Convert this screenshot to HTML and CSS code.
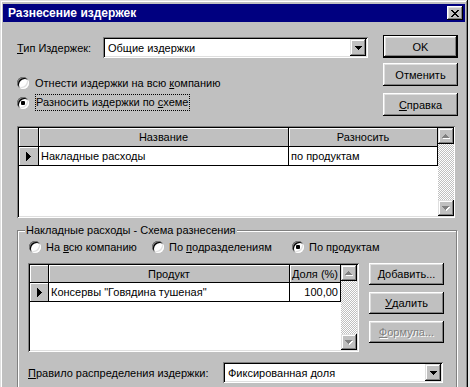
FILE: index.html
```html
<!DOCTYPE html>
<html lang="ru">
<head>
<meta charset="utf-8">
<title>Разнесение издержек</title>
<link rel="stylesheet" href="styles.css">
</head>
<body>
<div class="window">
  <div class="titlebar">
    <span class="title">Разнесение издержек</span>
    <span class="close-btn"><svg width="8" height="7" viewBox="0 0 8 7" shape-rendering="crispEdges"><path d="M0 0h2v1H0zM6 0h2v1H6zM1 1h2v1H1zM5 1h2v1H5zM2 2h4v1H2zM3 3h2v1H3zM2 4h4v1H2zM1 5h2v1H1zM5 5h2v1H5zM0 6h2v1H0zM6 6h2v1H6z"/></svg></span>
  </div>
  <div class="client">
    <div class="top">
      <div class="top-left">
        <div class="type-row">
          <span class="type-label"><u>Т</u>ип Издержек:</span>
          <div class="combo combo-type">
            <span class="combo-text">Общие издержки</span>
            <span class="combo-btn"><svg width="7" height="4" viewBox="0 0 7 4" shape-rendering="crispEdges"><path d="M0 0h7v1H0zM1 1h5v1H1zM2 2h3v1H2zM3 3h1v1H3z"/></svg></span>
          </div>
        </div>
        <div class="radio-row first"><span class="radio"></span><span>Отнести издержки на всю <u>к</u>омпанию</span></div>
        <div class="radio-row second"><span class="radio checked"><span class="dot"></span></span><span class="focus">Разносить издержки по <u>с</u>хеме</span></div>
      </div>
      <div class="buttons">
        <div class="btn default"><span class="btn-inner">OK</span></div>
        <div class="btn cancel"><span class="btn-inner">Отменить</span></div>
        <div class="btn help"><span class="btn-inner"><u>С</u>правка</span></div>
      </div>
    </div>

    <div class="grid grid1">
      <div class="grid-body">
        <div class="grid-row header">
          <div class="cell ind"></div>
          <div class="cell c-name center">Название</div>
          <div class="cell c-split center">Разносить</div>
        </div>
        <div class="grid-row data">
          <div class="cell ind"><svg width="5" height="9" viewBox="0 0 5 9" shape-rendering="crispEdges"><path d="M0 0h1v9H0zM1 1h1v7H1zM2 2h1v5H2zM3 3h1v3H3zM4 4h1v1H4z"/></svg></div>
          <div class="cell c-name">Накладные расходы</div>
          <div class="cell c-split">по продуктам</div>
        </div>
      </div>
      <div class="scrollbar">
        <span class="sb-btn"><svg width="8" height="5" viewBox="0 0 8 5" shape-rendering="crispEdges"><path fill="#fff" d="M4 1h1v1H4zM3 2h3v1H3zM2 3h5v1H2zM1 4h7v1H1z"/><path fill="#808080" d="M3 0h1v1H3zM2 1h3v1H2zM1 2h5v1H1zM0 3h7v1H0z"/></svg></span>
        <span class="sb-track"></span>
        <span class="sb-btn"><svg width="8" height="5" viewBox="0 0 8 5" shape-rendering="crispEdges"><path fill="#fff" d="M1 1h7v1H1zM2 2h5v1H2zM3 3h3v1H3zM4 4h1v1H4z"/><path fill="#808080" d="M0 0h7v1H0zM1 1h5v1H1zM2 2h3v1H2zM3 3h1v1H3z"/></svg></span>
      </div>
    </div>

    <fieldset class="group">
      <legend>Накладные расходы - Схема разнесения</legend>
      <div class="scheme-row">
        <div class="radio-item w1"><span class="radio"></span><span>На <u>в</u>сю компанию</span></div>
        <div class="radio-item w2"><span class="radio"></span><span>По <u>п</u>одразделениям</span></div>
        <div class="radio-item"><span class="radio checked"><span class="dot"></span></span><span>По п<u>р</u>одуктам</span></div>
      </div>
      <div class="middle">
        <div class="grid grid2">
          <div class="grid-body">
            <div class="grid-row header">
              <div class="cell ind"></div>
              <div class="cell c-prod center">Продукт</div>
              <div class="cell c-share right">Доля (%)</div>
            </div>
            <div class="grid-row data">
              <div class="cell ind"><svg width="5" height="9" viewBox="0 0 5 9" shape-rendering="crispEdges"><path d="M0 0h1v9H0zM1 1h1v7H1zM2 2h1v5H2zM3 3h1v3H3zM4 4h1v1H4z"/></svg></div>
              <div class="cell c-prod">Консервы "Говядина тушеная"</div>
              <div class="cell c-share right">100,00</div>
            </div>
          </div>
          <div class="scrollbar">
            <span class="sb-btn"><svg width="8" height="5" viewBox="0 0 8 5" shape-rendering="crispEdges"><path fill="#fff" d="M4 1h1v1H4zM3 2h3v1H3zM2 3h5v1H2zM1 4h7v1H1z"/><path fill="#808080" d="M3 0h1v1H3zM2 1h3v1H2zM1 2h5v1H1zM0 3h7v1H0z"/></svg></span>
            <span class="sb-track"></span>
            <span class="sb-btn"><svg width="8" height="5" viewBox="0 0 8 5" shape-rendering="crispEdges"><path fill="#fff" d="M1 1h7v1H1zM2 2h5v1H2zM3 3h3v1H3zM4 4h1v1H4z"/><path fill="#808080" d="M0 0h7v1H0zM1 1h5v1H1zM2 2h3v1H2zM3 3h1v1H3z"/></svg></span>
          </div>
        </div>
        <div class="side-buttons">
          <div class="btn"><span class="btn-inner"><u>Д</u>обавить...</span></div>
          <div class="btn gap7"><span class="btn-inner"><u>У</u>далить</span></div>
          <div class="btn gap7 disabled"><span class="btn-inner"><u>Ф</u>ормула...</span></div>
        </div>
      </div>
      <div class="rule-row">
        <span class="rule-label"><u>П</u>равило распределения издержки:</span>
        <div class="combo combo-rule">
          <span class="combo-text">Фиксированная доля</span>
          <span class="combo-btn"><svg width="7" height="4" viewBox="0 0 7 4" shape-rendering="crispEdges"><path d="M0 0h7v1H0zM1 1h5v1H1zM2 2h3v1H2zM3 3h1v1H3z"/></svg></span>
        </div>
      </div>
    </fieldset>
  </div>
</div>
</body>
</html>
```

FILE: styles.css
```css
* { box-sizing: border-box; }

html, body {
  margin: 0;
  padding: 0;
}

body {
  background: #e4e4e4;
  font-family: "Liberation Sans", Arial, sans-serif;
  font-size: 11px;
  color: #000;
  overflow: hidden;
  width: 470px;
  height: 387px;
}

u { text-decoration: underline; text-underline-offset: 1px; }

.window {
  width: 468px;
  height: 400px;
  background: #c0c0c0;
  padding: 4px 3px 3px 3px;
  box-shadow: inset -1px -1px #000, inset 1px 1px #dfdfdf, inset -2px -2px #808080, inset 2px 2px #fff;
}

.titlebar {
  height: 18px;
  background: #000080;
  display: flex;
  align-items: center;
  justify-content: space-between;
  padding: 0 2px 0 5px;
}

.title {
  color: #fff;
  font-weight: bold;
  font-size: 12px;
}

.close-btn {
  width: 16px;
  height: 14px;
  background: #c0c0c0;
  display: flex;
  align-items: center;
  justify-content: center;
  box-shadow: inset -1px -1px #000, inset 1px 1px #fff, inset -2px -2px #808080, inset 2px 2px #dfdfdf;
}

.client {
  padding: 0 0 0 14px;
}

/* top area */
.top {
  display: flex;
  padding-top: 13px;
}

.top-left {
  width: 351px;
  padding-top: 2px;
}

.type-row {
  display: flex;
  align-items: center;
  height: 21px;
}

.type-label { width: 86px; }

.combo {
  height: 21px;
  background: #fff;
  display: flex;
  align-items: center;
  justify-content: space-between;
  padding: 2px;
  box-shadow: inset 1px 1px #808080, inset -1px -1px #fff, inset 2px 2px #000, inset -2px -2px #dfdfdf;
}

.combo-type { width: 265px; }

.combo-text { padding-left: 3px; }

.combo-btn {
  width: 16px;
  height: 17px;
  background: #c0c0c0;
  display: flex;
  align-items: center;
  justify-content: center;
  box-shadow: inset -1px -1px #000, inset 1px 1px #dfdfdf, inset -2px -2px #808080, inset 2px 2px #fff;
}

.radio-row {
  display: flex;
  align-items: center;
  height: 17px;
  gap: 6px;
}

.radio-row.first { margin-top: 16px; }
.radio-row.second { margin-top: 3px; }

.radio {
  width: 12px;
  height: 12px;
  border-radius: 50%;
  background: #fff;
  flex: none;
  display: flex;
  align-items: center;
  justify-content: center;
  box-shadow: inset 1px 1px #808080, inset -1px -1px #fff, inset 2px 2px #000, inset -2px -2px #dfdfdf;
}

.dot {
  width: 4px;
  height: 4px;
  background: #000;
  border-radius: 1px;
}

.focus {
  border: 1px dotted #000;
  padding: 1px 1px 1px 0;
  line-height: 13px;
}

.buttons {
  margin-left: 15px;
  width: 75px;
  display: flex;
  flex-direction: column;
}

.btn {
  height: 23px;
  background: #c0c0c0;
  display: flex;
  box-shadow: inset -1px -1px #000, inset 1px 1px #fff, inset -2px -2px #808080, inset 2px 2px #dfdfdf;
}

.btn-inner {
  flex: 1;
  display: flex;
  align-items: center;
  justify-content: center;
}

.btn.default {
  border: 1px solid #000;
}

.btn.cancel { margin-top: 5px; }
.btn.help { margin-top: 7px; }

.btn.disabled .btn-inner {
  color: #808080;
  text-shadow: 1px 1px #fff;
}

/* grid */
.grid {
  display: flex;
  padding: 2px;
  background: #fff;
  box-shadow: inset 1px 1px #808080, inset -1px -1px #fff, inset 2px 2px #000, inset -2px -2px #dfdfdf;
}

.grid-body {
  flex: 1;
  background: #fff;
}

.grid-row {
  display: flex;
}

.grid-row.header { height: 19px; }
.grid-row.data { height: 19px; }

.cell {
  display: flex;
  align-items: center;
  padding: 0 2px;
  border-right: 1px solid #000;
  border-bottom: 1px solid #000;
  white-space: nowrap;
  overflow: hidden;
}

.header .cell {
  background: #c0c0c0;
  box-shadow: inset 1px 1px #fff;
}

.cell.center { justify-content: center; }
.cell.right { justify-content: flex-end; }

.cell.ind {
  width: 20px;
  background: #c0c0c0;
  justify-content: center;
  padding: 0;
  box-shadow: inset 1px 1px #fff;
}

.grid1 {
  margin-top: 10px;
  width: 438px;
  height: 92px;
}

.grid1 .c-name { width: 250px; }
.grid1 .c-split { width: 149px; }

.scrollbar {
  width: 16px;
  flex: none;
  display: flex;
  flex-direction: column;
}

.sb-btn {
  height: 16px;
  background: #c0c0c0;
  display: flex;
  align-items: center;
  justify-content: center;
  flex: none;
  box-shadow: inset -1px -1px #000, inset 1px 1px #dfdfdf, inset -2px -2px #808080, inset 2px 2px #fff;
}

.sb-track {
  flex: 1;
  background: repeating-conic-gradient(#c0c0c0 0 25%, #fff 0 50%) 0 0 / 2px 2px;
}

/* group */
.group {
  margin: 6px 0 0 0;
  width: 440px;
  min-width: 0;
  height: 200px;
  padding: 0 10px 0 10px;
  border: 1px solid #808080;
  box-shadow: inset 1px 1px #fff, 1px 1px #fff;
}

.group legend {
  padding: 0 1px;
  margin-left: -3px;
  line-height: 13px;
  background: #c0c0c0;
}

.scheme-row {
  display: flex;
  align-items: center;
  height: 16px;
  margin-top: 2px;
  padding-left: 1px;
}

.radio-item {
  display: flex;
  align-items: center;
  gap: 5px;
}

.radio-item.w1 { width: 123px; }
.radio-item.w2 { width: 140px; }

.middle {
  display: flex;
  margin-top: 8px;
}

.grid2 {
  width: 331px;
  height: 89px;
}

.grid2 .grid-row.header { height: 18px; }
.grid2 .cell.ind { width: 19px; }
.grid2 .c-prod { width: 241px; }
.grid2 .c-share { width: 51px; }

.side-buttons {
  margin-left: 10px;
  width: 75px;
  display: flex;
  flex-direction: column;
}

.side-buttons .btn { height: 22px; }
.side-buttons .btn.gap7 { margin-top: 7px; }

.rule-row {
  display: flex;
  align-items: center;
  margin-top: 10px;
}

.rule-label { width: 195px; }

.combo-rule { width: 220px; }
```
